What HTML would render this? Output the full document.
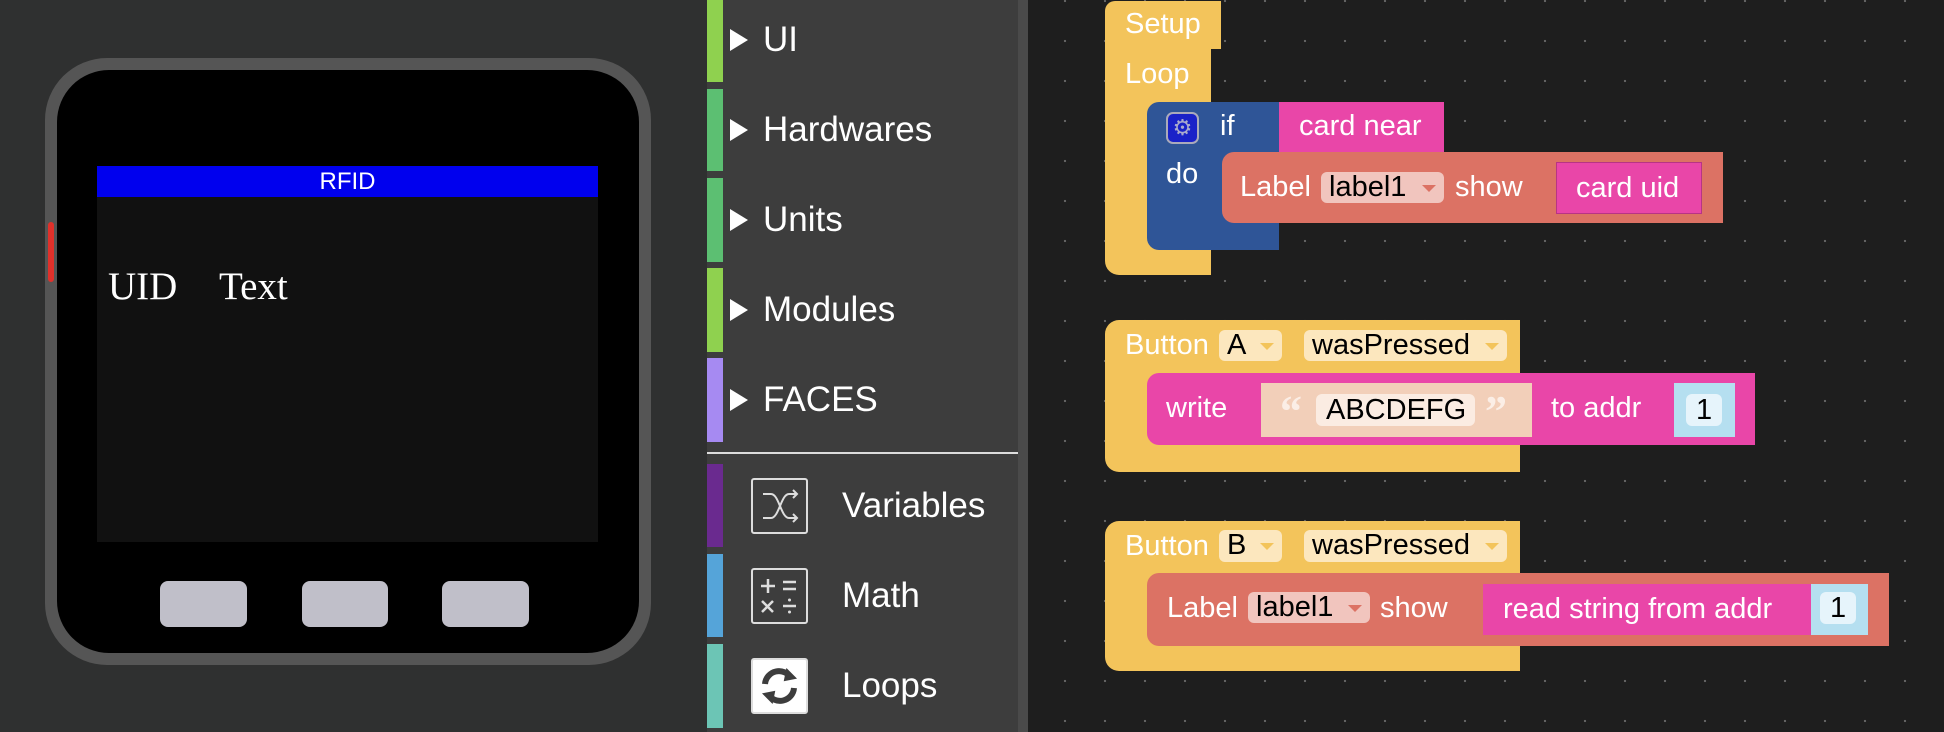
<!DOCTYPE html>
<html><head><meta charset="utf-8"><style>
*{margin:0;padding:0;box-sizing:border-box}
body{width:1944px;height:732px;overflow:hidden;background:#2f3030;font-family:"Liberation Sans",sans-serif;position:relative}
.a{position:absolute}
.t{position:absolute;color:#fff;font-size:29px;line-height:1;white-space:nowrap}
.side .lbl{position:absolute;color:#fff;font-size:35px;left:763px;line-height:1}
.tri{position:absolute;left:730px;width:0;height:0;border-left:18px solid #fff;border-top:11px solid transparent;border-bottom:11px solid transparent}
.strip{position:absolute;left:707px;width:16px}
.dd{position:absolute;border-radius:6px;color:#000;font-size:29px;line-height:31px;padding-left:8px;white-space:nowrap}
.dd i{position:absolute;right:8px;top:13px;border-top:7px solid;border-left:7px solid transparent;border-right:7px solid transparent}
.icon{position:absolute;left:751px;width:57px;height:56px;border:2px solid #ddd;border-radius:3px}
</style></head><body>
<!-- device -->
<div class="a" style="left:45px;top:58px;width:606px;height:607px;background:#555;border-radius:62px"></div>
<div class="a" style="left:57px;top:70px;width:582px;height:583px;background:#000;border-radius:52px"></div>
<div class="a" style="left:48px;top:222px;width:6px;height:60px;background:#e0302a;border-radius:3px"></div>
<div class="a" style="left:97px;top:166px;width:501px;height:376px;background:#111"></div>
<div class="a" style="left:97px;top:166px;width:501px;height:31px;background:#0000ee;color:#fff;font-size:24px;text-align:center;line-height:32px">RFID</div>
<div class="a" style="left:108px;top:264px;color:#fff;font-family:'Liberation Serif',serif;font-size:39px">UID</div>
<div class="a" style="left:219px;top:264px;color:#fff;font-family:'Liberation Serif',serif;font-size:39px">Text</div>
<div class="a" style="left:160px;top:581px;width:87px;height:46px;background:#c0bfc9;border-radius:8px"></div>
<div class="a" style="left:302px;top:581px;width:86px;height:46px;background:#c0bfc9;border-radius:8px"></div>
<div class="a" style="left:442px;top:581px;width:87px;height:46px;background:#c0bfc9;border-radius:8px"></div>
<!-- sidebar -->
<div class="side">
<div class="a" style="left:707px;top:0;width:311px;height:732px;background:#3d3d3d"></div>
<div class="a" style="left:1018px;top:0;width:10px;height:732px;background:#4a4a4a"></div>
<div class="strip" style="top:0;height:82px;background:#8fd14f"></div>
<div class="strip" style="top:89px;height:82px;background:#5cbf72"></div>
<div class="strip" style="top:178px;height:84px;background:#5cbf72"></div>
<div class="strip" style="top:268px;height:84px;background:#8fd14f"></div>
<div class="strip" style="top:358px;height:84px;background:#a68af2"></div>
<div class="a" style="left:707px;top:452px;width:311px;height:2px;background:#ddd"></div>
<div class="strip" style="top:464px;height:83px;background:#6a2a8f"></div>
<div class="strip" style="top:554px;height:83px;background:#55a4d9"></div>
<div class="strip" style="top:644px;height:84px;background:#6cc5b5"></div>
<div class="tri" style="top:29px"></div><div class="lbl" style="top:22px">UI</div>
<div class="tri" style="top:119px"></div><div class="lbl" style="top:112px">Hardwares</div>
<div class="tri" style="top:209px"></div><div class="lbl" style="top:202px">Units</div>
<div class="tri" style="top:299px"></div><div class="lbl" style="top:292px">Modules</div>
<div class="tri" style="top:389px"></div><div class="lbl" style="top:382px">FACES</div>
<div class="icon" style="top:478px"><svg width="53" height="52" viewBox="0 0 53 52" fill="none" stroke="#ddd" stroke-width="2"><path d="M10 14h8c8 0 10 24 18 24h8M10 38h8c8 0 10-24 18-24h8"/><path d="M40 10l4 4-4 4M40 34l4 4-4 4"/></svg></div>
<div class="lbl" style="left:842px;top:488px">Variables</div>
<div class="icon" style="top:568px"><svg width="53" height="52" viewBox="0 0 53 52" stroke="#ddd" stroke-width="2.5"><path d="M8 16h14M15 9v14M30 12h13M30 19h13M9 31l11 11M20 31L9 42M30 36h13"/><circle cx="36.5" cy="30" r="1.5" fill="#ddd" stroke="none"/><circle cx="36.5" cy="42" r="1.5" fill="#ddd" stroke="none"/></svg></div>
<div class="lbl" style="left:842px;top:578px">Math</div>
<div class="icon" style="top:658px;background:#fff"><svg width="53" height="52" viewBox="0 0 53 52" fill="none" stroke="#3d3d3d" stroke-width="6"><path d="M12 24a14 14 0 0 1 26-6"/><path d="M41 28a14 14 0 0 1-26 6"/><path d="M34 10l8 8-10 2z" fill="#3d3d3d" stroke-width="2"/><path d="M19 42l-8-8 10-2z" fill="#3d3d3d" stroke-width="2"/></svg></div>
<div class="lbl" style="left:842px;top:668px">Loops</div>
</div>
<!-- workspace -->
<div class="a" style="left:1028px;top:0;width:916px;height:732px;background-color:#1e1e1e;background-image:radial-gradient(circle,#666 1px,transparent 1.3px);background-size:40px 40px;background-position:1017px -19px"></div>

<!-- Setup / Loop -->
<div class="a" style="left:1105px;top:1px;width:116px;height:48px;background:#f3c45b;border-radius:10px 0 0 0"></div>
<div class="t" style="left:1125px;top:10px">Setup</div>
<div class="a" style="left:1105px;top:49px;width:106px;height:226px;background:#f3c45b;border-radius:0 0 0 14px"></div>
<div class="t" style="left:1125px;top:60px">Loop</div>
<!-- if -->
<div class="a" style="left:1147px;top:102px;width:132px;height:148px;background:#2f5597;border-radius:12px 0 0 12px"></div>
<div class="a" style="left:1166px;top:112px;width:33px;height:32px;background:#1a22c8;border:2px solid #aab;border-radius:7px;color:#aac;font-size:22px;text-align:center;line-height:27px">⚙</div>
<div class="t" style="left:1220px;top:112px">if</div>
<div class="t" style="left:1166px;top:160px">do</div>
<div class="a" style="left:1279px;top:102px;width:165px;height:50px;background:#e946a8"></div>
<div class="t" style="left:1299px;top:112px">card near</div>
<!-- label card uid -->
<div class="a" style="left:1222px;top:152px;width:501px;height:71px;background:#dc7264;border-radius:12px 0 0 12px"></div>
<div class="t" style="left:1240px;top:173px">Label</div>
<div class="dd" style="left:1321px;top:172px;width:123px;height:31px;background:#f1c5be">label1<i style="color:#dc7264"></i></div>
<div class="t" style="left:1455px;top:173px">show</div>
<div class="a" style="left:1556px;top:162px;width:146px;height:52px;background:#e946a8;border:1px solid #b83485"></div>
<div class="t" style="left:1576px;top:174px">card uid</div>

<!-- Button A -->
<div class="a" style="left:1105px;top:320px;width:415px;height:152px;background:#f3c45b;border-radius:14px 0 0 14px"></div>
<div class="t" style="left:1125px;top:331px">Button</div>
<div class="dd" style="left:1219px;top:330px;width:63px;height:31px;background:#fce7be">A<i style="color:#f3c45b"></i></div>
<div class="dd" style="left:1304px;top:330px;width:203px;height:31px;background:#fce7be">wasPressed<i style="color:#f3c45b"></i></div>
<div class="a" style="left:1147px;top:373px;width:608px;height:72px;background:#e946a8;border-radius:12px 0 0 12px"></div>
<div class="t" style="left:1166px;top:394px">write</div>
<div class="a" style="left:1261px;top:383px;width:271px;height:54px;background:#f2cfb9"></div>
<div class="t" style="left:1280px;top:390px;font-size:44px;font-weight:bold;color:#fbeee6;font-family:'Liberation Serif',serif">“</div>
<div class="dd" style="left:1316px;top:394px;width:159px;height:32px;background:#fbece2;padding-left:10px;line-height:33px">ABCDEFG</div>
<div class="t" style="left:1485px;top:390px;font-size:44px;font-weight:bold;color:#fbeee6;font-family:'Liberation Serif',serif">”</div>
<div class="t" style="left:1551px;top:394px">to addr</div>
<div class="a" style="left:1674px;top:383px;width:61px;height:54px;background:#b5dff0"></div>
<div class="dd" style="left:1686px;top:394px;width:36px;height:32px;background:#e6f4fb;padding-left:10px;line-height:33px">1</div>

<!-- Button B -->
<div class="a" style="left:1105px;top:521px;width:415px;height:150px;background:#f3c45b;border-radius:14px 0 0 14px"></div>
<div class="t" style="left:1125px;top:532px">Button</div>
<div class="dd" style="left:1219px;top:530px;width:63px;height:32px;background:#fce7be">B<i style="color:#f3c45b"></i></div>
<div class="dd" style="left:1304px;top:530px;width:203px;height:32px;background:#fce7be">wasPressed<i style="color:#f3c45b"></i></div>
<div class="a" style="left:1147px;top:573px;width:742px;height:73px;background:#dc7264;border-radius:12px 0 0 12px"></div>
<div class="t" style="left:1167px;top:594px">Label</div>
<div class="dd" style="left:1248px;top:592px;width:122px;height:31px;background:#f1c5be">label1<i style="color:#dc7264"></i></div>
<div class="t" style="left:1380px;top:594px">show</div>
<div class="a" style="left:1483px;top:584px;width:328px;height:51px;background:#e946a8"></div>
<div class="t" style="left:1503px;top:595px">read string from addr</div>
<div class="a" style="left:1811px;top:584px;width:57px;height:51px;background:#b5dff0"></div>
<div class="dd" style="left:1820px;top:592px;width:36px;height:32px;background:#e6f4fb;padding-left:10px;line-height:33px">1</div>
</body></html>
